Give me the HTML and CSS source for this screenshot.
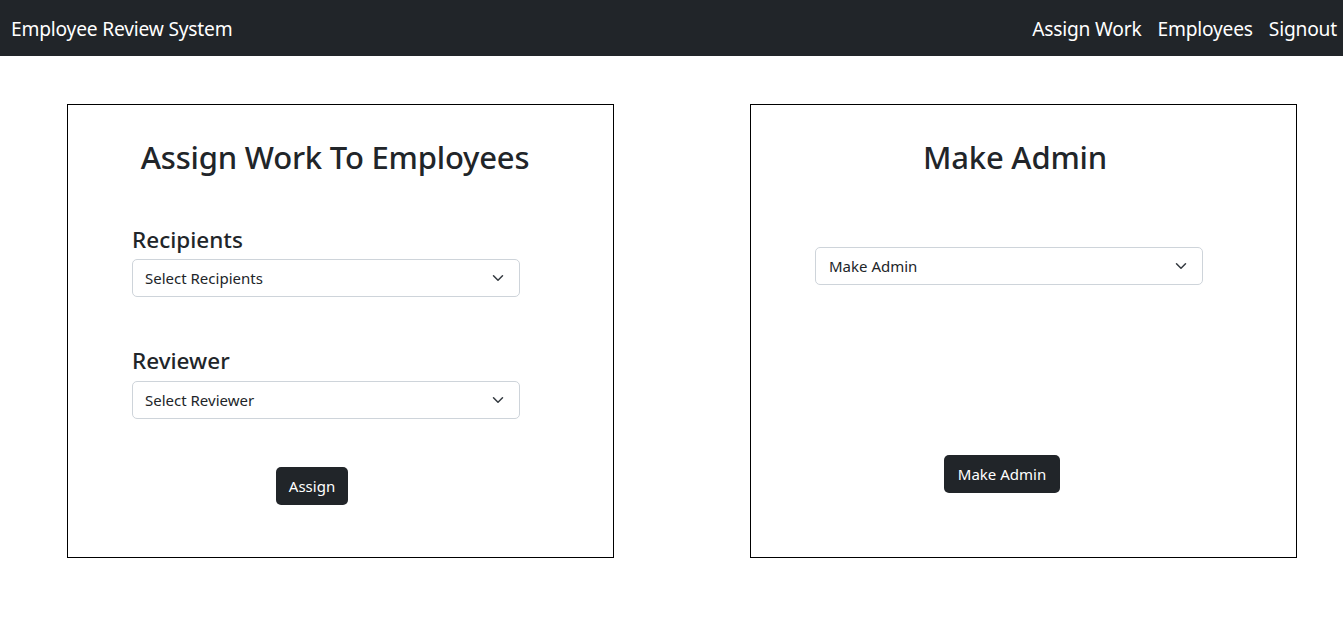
FILE: index.html
```html
<!DOCTYPE html>
<html lang="en">
<head>
<meta charset="utf-8">
<title>Employee Review System</title>
<link rel="stylesheet" href="styles.css">
</head>
<body>
<nav class="navbar">
  <a class="brand" href="#">Employee Review System</a>
  <div class="nav-links">
    <a href="#">Assign Work</a>
    <a href="#">Employees</a>
    <a href="#">Signout</a>
  </div>
</nav>
<main class="main">
  <section class="card card-left">
    <h2 class="card-title">Assign Work To Employees</h2>
    <form class="form">
      <label class="field-label">Recipients</label>
      <div class="select"><span>Select Recipients</span><svg class="chev" viewBox="0 0 16 16" width="16" height="12"><path d="M2 5l6 6 6-6" fill="none" stroke="#343a40" stroke-width="2" stroke-linecap="round" stroke-linejoin="round"/></svg></div>
      <label class="field-label second">Reviewer</label>
      <div class="select"><span>Select Reviewer</span><svg class="chev" viewBox="0 0 16 16" width="16" height="12"><path d="M2 5l6 6 6-6" fill="none" stroke="#343a40" stroke-width="2" stroke-linecap="round" stroke-linejoin="round"/></svg></div>
      <button type="button" class="btn btn-assign">Assign</button>
    </form>
  </section>
  <section class="card card-right">
    <h2 class="card-title title-admin">Make Admin</h2>
    <form class="form">
      <div class="select select-admin"><span>Make Admin</span><svg class="chev" viewBox="0 0 16 16" width="16" height="12"><path d="M2 5l6 6 6-6" fill="none" stroke="#343a40" stroke-width="2" stroke-linecap="round" stroke-linejoin="round"/></svg></div>
      <button type="button" class="btn btn-admin">Make Admin</button>
    </form>
  </section>
</main>
</body>
</html>
```
FILE: styles.css
```css
* { box-sizing: border-box; }
body {
  margin: 0;
  font-family: "Noto Sans", "Open Sans", sans-serif;
  color: #212529;
  background: #fff;
}
.navbar {
  height: 56px;
  background: #212529;
  display: flex;
  align-items: center;
  justify-content: space-between;
  padding: 0 6px 0 11px;
}
.navbar a {
  color: #fff;
  text-decoration: none;
  font-size: 19.2px;
  letter-spacing: -0.2px;
}
.nav-links {
  display: flex;
  gap: 16px;
}
.main {
  display: flex;
  padding: 48px 0 0 67px;
  gap: 136px;
}
.card {
  width: 547px;
  height: 454px;
  border: 1px solid #000;
  padding: 33px 0 0 64px;
  display: flex;
  flex-direction: column;
}
.card-title {
  margin: 0;
  font-size: 31px;
  font-weight: 500;
  line-height: 38px;
  letter-spacing: -0.2px;
  width: 406px;
  text-align: center;
}
.title-admin { width: 400px; }
.form {
  display: flex;
  flex-direction: column;
  width: 388px;
}
.field-label {
  margin-top: 49px;
  font-size: 22.5px;
  font-weight: 500;
  line-height: 29px;
  margin-bottom: 5px;
}
.field-label.second { margin-top: 49px; margin-bottom: 6px; }
.select {
  height: 38px;
  border: 1px solid #ced4da;
  border-radius: 5px;
  display: flex;
  align-items: center;
  justify-content: space-between;
  padding: 0 13px 0 12px;
  font-size: 15px;
  color: #212529;
}
.select-admin { margin-top: 71px; padding-left: 13px; }
.chev { display: block; }
.btn {
  align-self: flex-start;
  height: 38px;
  background: #212529;
  color: #fff;
  border: 0;
  border-radius: 5px;
  font-family: inherit;
  font-size: 15px;
  padding: 0 12px;
}
.btn-assign { margin-top: 48px; margin-left: 144px; width: 72px; }
.btn-admin { margin-top: 170px; margin-left: 129px; width: 116px; }
```
